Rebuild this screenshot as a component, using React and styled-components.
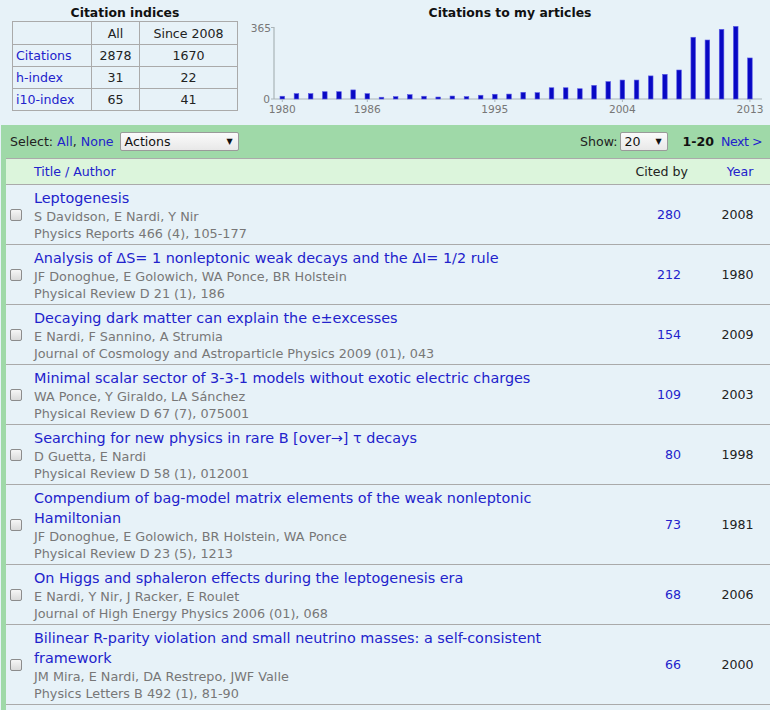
import React from "react";
import styled, { createGlobalStyle } from "styled-components";

const GlobalStyle = createGlobalStyle`
  html, body { margin: 0; padding: 0; }
  body {
    width: 770px;
    height: 710px;
    overflow: hidden;
    background: #e7f2f8;
    font-family: "DejaVu Sans", Verdana, sans-serif;
    font-size: 12.6px;
    color: #222;
  }
`;

const BLUE = "#2222cc";
const GRAY_LINE = "#aaaaaa";

const Top = styled.div`
  display: flex;
  align-items: flex-start;
  height: 125px;
  padding: 4px 0 0 12px;
  box-sizing: border-box;
`;

const IndicesBlock = styled.div`
  width: 226px;
`;

const BlockTitle = styled.div`
  font-weight: bold;
  font-size: 12.4px;
  line-height: 17px;
  text-align: center;
  color: #111;
`;

const IndexTable = styled.table`
  border-collapse: collapse;
  width: 226px;
  font-size: 12.6px;
  td, th {
    border: 1px solid ${GRAY_LINE};
    height: 21px;
    padding: 0 3px;
    font-weight: normal;
    text-align: center;
    color: #222;
  }
  tr:first-child th { height: 22px; }
  td:first-child { text-align: left; width: 72px; }
  td:nth-child(2), th:nth-child(2) { width: 41px; }
`;

const Link = styled.a`
  color: ${BLUE};
  text-decoration: none;
  cursor: pointer;
`;

const NextLink = styled(Link)`
  letter-spacing: -0.5px;
`;

const ChartBlock = styled.div`
  margin-left: 12px;
  width: 520px;
`;

const ChartSvg = styled.svg`
  display: block;
  width: 520px;
  height: 100px;
`;

const Results = styled.div`
  margin-left: 1px;
  background: #9fd9a8;
`;

const Toolbar = styled.div`
  height: 33px;
  display: flex;
  align-items: center;
  padding: 0 8px 0 9px;
`;

const Label = styled.span`
  color: #222;
  margin-right: ${(p) => p.$gap || 0}px;
`;

const Spacer = styled.div`
  flex: 1;
`;

const FakeSelect = styled.div`
  box-sizing: border-box;
  width: ${(p) => p.$w}px;
  height: 19px;
  border: 1px solid #9a9a9a;
  border-radius: 2px;
  background: linear-gradient(#fbfbfb, #e8e8e8);
  display: flex;
  align-items: center;
  justify-content: space-between;
  padding: 0 5px 0 4px;
  color: #111;
  font-size: 12.6px;
`;

const Arrow = styled.span`
  font-size: 8px;
  color: #111;
`;

const Pager = styled.b`
  margin: 0 7px 0 15px;
  color: #111;
`;

const List = styled.div`
  margin-left: 5px;
  padding-bottom: 20px;
  background: #e7f2f8;
`;

const Grid = styled.div`
  display: grid;
  grid-template-columns: 28px 1fr 100px 65px;
  align-items: center;
`;

const HeaderRow = styled(Grid)`
  height: 25px;
  background: #dcf5dc;
  border-bottom: 1px solid ${GRAY_LINE};
  border-top: 1px solid ${GRAY_LINE};
`;

const HeadCited = styled.span`
  text-align: right;
  padding-right: 17px;
  color: #222;
`;

const HeadYear = styled.span`
  text-align: center;
  padding-left: 5px;
`;

const Row = styled(Grid)`
  border-bottom: 1px solid ${GRAY_LINE};
`;

const CheckCell = styled.div`
  padding-left: 4px;
  display: flex;
  align-items: center;
`;

const Checkbox = styled.span`
  box-sizing: border-box;
  width: 12px;
  height: 12px;
  border: 1px solid #8c8c8c;
  border-radius: 2px;
  background: linear-gradient(#f6f6f6, #dadada);
`;

const TitleCell = styled.div`
  padding: 3px 40px 2px 0;
`;

const ArticleTitle = styled.a`
  display: block;
  color: ${BLUE};
  font-size: 14.4px;
  line-height: 20px;
  text-decoration: none;
`;

const Meta = styled.div`
  color: #777;
  font-size: 12.8px;
  line-height: 17px;
  white-space: nowrap;
`;

const Cited = styled.a`
  text-align: right;
  padding-right: 24px;
  color: ${BLUE};
  text-decoration: none;
`;

const Year = styled.span`
  text-align: center;
  color: #222;
`;

const chartData = [
  14, 27, 27, 37, 37, 46, 27, 9, 12, 22, 14, 10, 15, 12, 19, 24, 25, 34, 32, 57,
  57, 52, 69, 88, 96, 96, 117, 125, 147, 313, 299, 353, 368, 208,
];

const Chart = () => {
  const base = 78;
  const x0 = 32.3;
  const step = 14.17;
  const labels = [
    [0, "1980"],
    [6, "1986"],
    [15, "1995"],
    [24, "2004"],
    [33, "2013"],
  ];
  return (
    <ChartSvg viewBox="0 0 520 100">
      <line x1="24" y1="6" x2="24" y2={base} stroke="#aab4b8" strokeWidth="1.2" />
      <line x1="24" y1={base} x2="512" y2={base} stroke="#aab4b8" strokeWidth="1.2" />
      <line x1="21" y1="6.5" x2="24" y2="6.5" stroke="#aab4b8" />
      <line x1="21" y1={base} x2="24" y2={base} stroke="#aab4b8" />
      <text x="21" y="10.5" textAnchor="end" fontSize="10.6" fill="#777" fontFamily="DejaVu Sans">365</text>
      <text x="20" y="82" textAnchor="end" fontSize="10.6" fill="#777" fontFamily="DejaVu Sans">0</text>
      {chartData.map((v, i) => {
        const h = (v / 365) * 72;
        const cx = x0 + i * step;
        return (
          <rect
            key={i}
            x={cx - 2.3}
            y={base - h}
            width="4.6"
            height={h}
            fill="#0808c4"
            stroke="#5a5ae6"
            strokeWidth="0.6"
          />
        );
      })}
      {labels.map(([i, t]) => {
        const cx = x0 + i * step;
        return (
          <g key={t}>
            <line x1={cx} y1={base} x2={cx} y2={base + 3} stroke="#aab4b8" />
            <text x={cx} y="92" textAnchor="middle" fontSize="10.6" fill="#777" fontFamily="DejaVu Sans">
              {t}
            </text>
          </g>
        );
      })}
    </ChartSvg>
  );
};

const articles = [
  {
    title: "Leptogenesis",
    authors: "S Davidson, E Nardi, Y Nir",
    source: "Physics Reports 466 (4), 105-177",
    cited: 280,
    year: 2008,
  },
  {
    title: "Analysis of ΔS= 1 nonleptonic weak decays and the ΔI= 1/2 rule",
    authors: "JF Donoghue, E Golowich, WA Ponce, BR Holstein",
    source: "Physical Review D 21 (1), 186",
    cited: 212,
    year: 1980,
  },
  {
    title: "Decaying dark matter can explain the e±excesses",
    authors: "E Nardi, F Sannino, A Strumia",
    source: "Journal of Cosmology and Astroparticle Physics 2009 (01), 043",
    cited: 154,
    year: 2009,
  },
  {
    title: "Minimal scalar sector of 3-3-1 models without exotic electric charges",
    authors: "WA Ponce, Y Giraldo, LA Sánchez",
    source: "Physical Review D 67 (7), 075001",
    cited: 109,
    year: 2003,
  },
  {
    title: "Searching for new physics in rare B [over→] τ decays",
    authors: "D Guetta, E Nardi",
    source: "Physical Review D 58 (1), 012001",
    cited: 80,
    year: 1998,
  },
  {
    title: "Compendium of bag-model matrix elements of the weak nonleptonic Hamiltonian",
    authors: "JF Donoghue, E Golowich, BR Holstein, WA Ponce",
    source: "Physical Review D 23 (5), 1213",
    cited: 73,
    year: 1981,
  },
  {
    title: "On Higgs and sphaleron effects during the leptogenesis era",
    authors: "E Nardi, Y Nir, J Racker, E Roulet",
    source: "Journal of High Energy Physics 2006 (01), 068",
    cited: 68,
    year: 2006,
  },
  {
    title: "Bilinear R-parity violation and small neutrino masses: a self-consistent framework",
    authors: "JM Mira, E Nardi, DA Restrepo, JWF Valle",
    source: "Physics Letters B 492 (1), 81-90",
    cited: 66,
    year: 2000,
  },
];

export default function App() {
  return (
    <>
      <GlobalStyle />
      <Top>
        <IndicesBlock>
          <BlockTitle>Citation indices</BlockTitle>
          <IndexTable>
            <tbody>
              <tr>
                <th></th>
                <th>All</th>
                <th>Since 2008</th>
              </tr>
              <tr>
                <td><Link>Citations</Link></td>
                <td>2878</td>
                <td>1670</td>
              </tr>
              <tr>
                <td><Link>h-index</Link></td>
                <td>31</td>
                <td>22</td>
              </tr>
              <tr>
                <td><Link>i10-index</Link></td>
                <td>65</td>
                <td>41</td>
              </tr>
            </tbody>
          </IndexTable>
        </IndicesBlock>
        <ChartBlock>
          <BlockTitle>Citations to my articles</BlockTitle>
          <Chart />
        </ChartBlock>
      </Top>
      <Results>
        <Toolbar>
          <Label $gap={6}>
            Select: <Link>All</Link>, <Link>None</Link>
          </Label>
          <FakeSelect $w={119}>
            <span>Actions</span>
            <Arrow>▼</Arrow>
          </FakeSelect>
          <Spacer />
          <Label $gap={2}>Show:</Label>
          <FakeSelect $w={48}>
            <span>20</span>
            <Arrow>▼</Arrow>
          </FakeSelect>
          <Pager>1-20</Pager>
          <NextLink>Next &gt;</NextLink>
        </Toolbar>
        <List>
          <HeaderRow>
            <span />
            <Link>Title / Author</Link>
            <HeadCited>Cited by</HeadCited>
            <HeadYear><Link>Year</Link></HeadYear>
          </HeaderRow>
          {articles.map((a) => (
            <Row key={a.title}>
              <CheckCell>
                <Checkbox />
              </CheckCell>
              <TitleCell>
                <ArticleTitle>{a.title}</ArticleTitle>
                <Meta>{a.authors}</Meta>
                <Meta>{a.source}</Meta>
              </TitleCell>
              <Cited>{a.cited}</Cited>
              <Year>{a.year}</Year>
            </Row>
          ))}
        </List>
      </Results>
    </>
  );
}
